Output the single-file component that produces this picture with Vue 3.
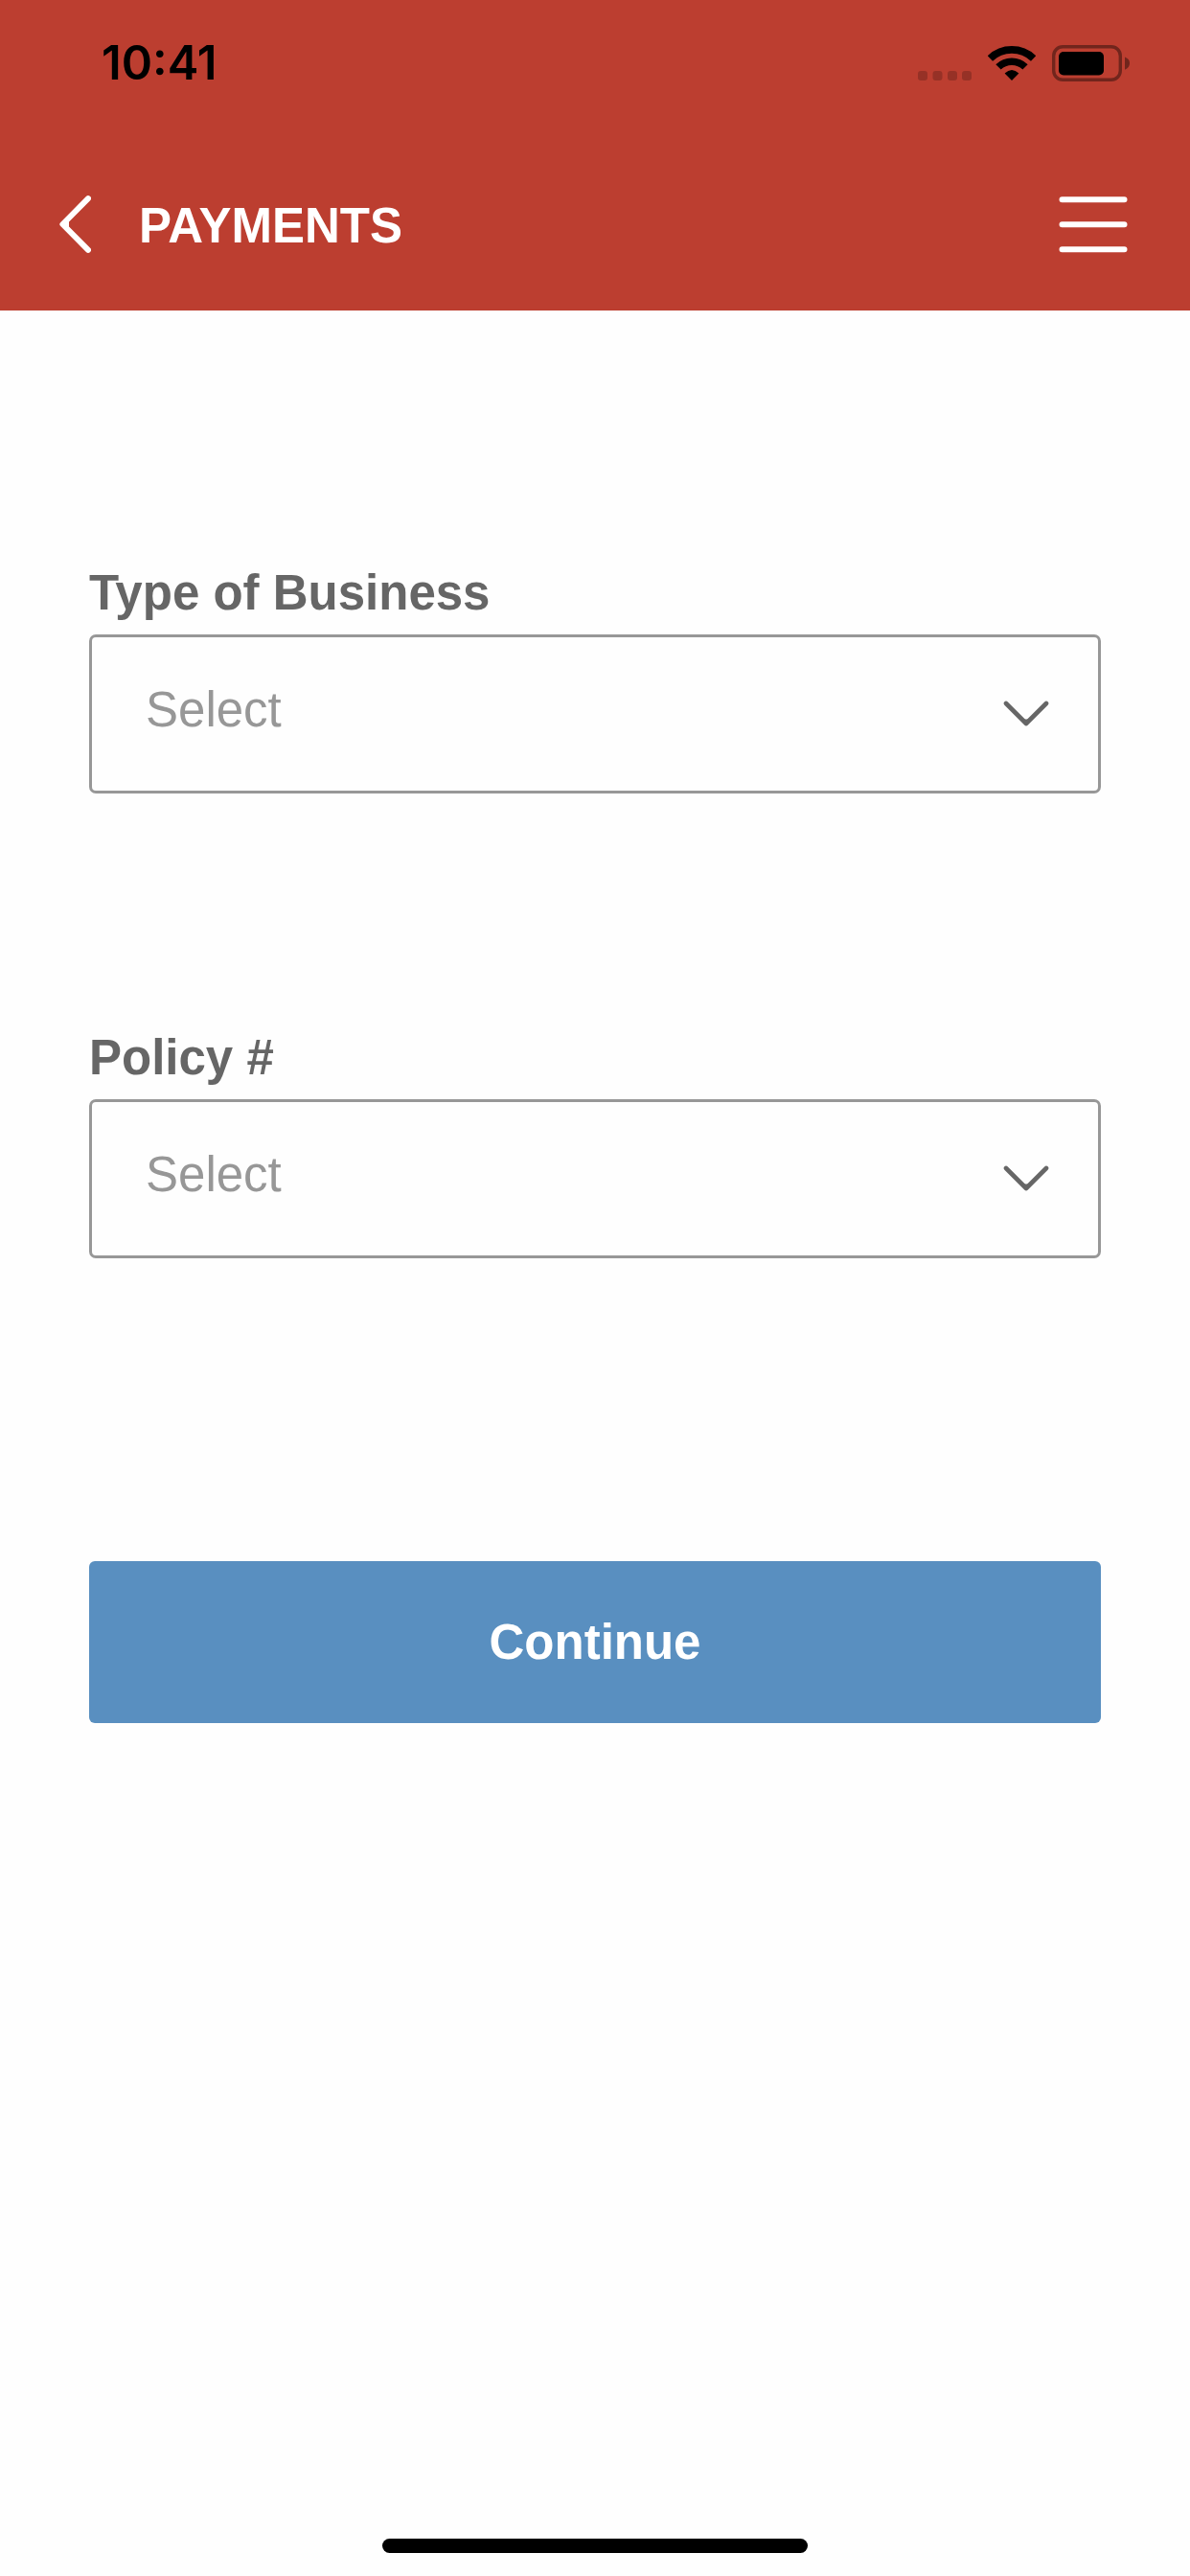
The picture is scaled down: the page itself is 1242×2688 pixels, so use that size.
<script setup>
import { ref } from 'vue'

const fields = ref([
  { id: 'business-type', label: 'Type of Business', value: '' },
  { id: 'policy-number', label: 'Policy #', value: '' },
])
</script>

<template>
  <div class="screen">
    <header class="header">
      <div class="status">
        <span class="time">10:41</span>
        <div class="indicators">
          <svg width="56" height="38" viewBox="0 0 56 38" aria-hidden="true">
            <g fill="#000" fill-opacity="0.2">
              <rect x="0" y="27" width="10" height="10" rx="3" />
              <rect x="15.5" y="27" width="10" height="10" rx="3" />
              <rect x="31" y="27" width="10" height="10" rx="3" />
              <rect x="46" y="27" width="10" height="10" rx="3" />
            </g>
          </svg>
          <svg width="50" height="38" viewBox="0 0 50 38" aria-hidden="true">
            <g fill="none" stroke="#000" stroke-width="7.6">
              <path d="M2.4 14A32.6 32.6 0 0 1 47.6 14" />
              <path d="M11 22.9A20 20 0 0 1 39 22.9" />
            </g>
            <path d="M17.6 29.6Q25 22.4 32.4 29.6L25 37Z" />
          </svg>
          <svg width="81" height="38" viewBox="0 0 81 38" aria-hidden="true">
            <rect x="1.7" y="1.7" width="69.6" height="34.6" rx="9.5" fill="none" stroke="#000" stroke-opacity="0.4" stroke-width="3.4" />
            <rect x="7" y="7" width="47" height="24.4" rx="5" />
            <path d="M76 12.6Q81 14.6 81 19T76 25.8Z" fill-opacity="0.4" />
          </svg>
        </div>
      </div>
      <nav class="bar">
        <button class="icon-button" type="button" aria-label="Back">
          <svg width="33" height="60" viewBox="0 0 33 60" fill="none" aria-hidden="true">
            <path d="M30 3.2L3.4 30L30 56.8" stroke="#fff" stroke-width="6" stroke-linecap="round" stroke-linejoin="round" />
            <path d="M4 30L13 21.5L10 27V33L13 38.5Z" fill="#fff" />
          </svg>
        </button>
        <h1 class="title">PAYMENTS</h1>
        <button class="icon-button menu" type="button" aria-label="Menu">
          <svg width="72" height="60" viewBox="0 0 72 60" stroke="#fff" stroke-width="6" stroke-linecap="round" aria-hidden="true">
            <path d="M3.5 4.3H68.5M3.5 30.3H68.5M3.5 56.3H68.5" />
          </svg>
        </button>
      </nav>
    </header>

    <form class="form" @submit.prevent>
      <div class="fields">
        <div v-for="field in fields" :key="field.id" class="field">
          <label class="label" :for="field.id">{{ field.label }}</label>
          <div class="picker">
            <select :id="field.id" v-model="field.value" class="select">
              <option value="">Select</option>
            </select>
            <svg class="chevron" width="48" height="28" viewBox="0 0 48 28" fill="none" aria-hidden="true">
              <path d="M3 3L24 24L45 3" stroke="#666" stroke-width="4.6" stroke-linecap="round" stroke-linejoin="round" />
              <path d="M18 18L21.5 19.5H26.5L30 18L24 25Z" fill="#666" />
            </svg>
          </div>
        </div>
      </div>
      <button class="continue" type="submit">Continue</button>
    </form>

    <div class="home-indicator"></div>
  </div>
</template>

<style>
body {
  margin: 0;
  background: #fefefe;
}
</style>

<style scoped>
.screen {
  display: flex;
  flex-direction: column;
  min-height: 100vh;
  background: #fefefe;
  font-family: "Liberation Sans", Arial, sans-serif;
  font-size: 51px;
  line-height: 60px;
}

.header {
  background: #bc3e30;
}

.status {
  display: flex;
  align-items: center;
  justify-content: space-between;
  height: 132px;
  padding: 0 63px 0 106px;
}

.time {
  font-family: Inter, sans-serif;
  font-size: 49px;
  font-weight: 600;
  color: #000;
}

.indicators {
  display: flex;
  gap: 17px;
}

.bar {
  display: flex;
  align-items: center;
  height: 180px;
  padding: 12px 65px 0 62px;
}

.icon-button {
  display: flex;
  padding: 0;
  border: 0;
  background: none;
}

.menu {
  margin-left: auto;
}

.title {
  margin: 0 0 0 50px;
  padding-top: 3px;
  font-size: 51px;
  font-weight: 700;
  color: #fff;
}

.form {
  display: flex;
  flex-direction: column;
  padding: 265px 93px 0;
}

.fields {
  display: flex;
  flex-direction: column;
  gap: 246px;
}

.field {
  display: flex;
  flex-direction: column;
  gap: 13px;
}

.label {
  font-weight: 700;
  color: #666;
}

.picker {
  display: grid;
  align-items: center;
}

.select,
.chevron {
  grid-area: 1 / 1;
}

.select {
  appearance: none;
  box-sizing: border-box;
  width: 100%;
  height: 166px;
  padding: 0 120px 8px 56px;
  border: 3px solid #979797;
  border-radius: 7px;
  background: transparent;
  font: inherit;
  color: #979797;
}

.chevron {
  justify-self: end;
  margin-right: 54px;
  pointer-events: none;
}

.continue {
  height: 169px;
  margin-top: 316px;
  border: 0;
  border-radius: 6px;
  background: #598fc0;
  font: inherit;
  font-weight: 700;
  color: #fff;
}

.home-indicator {
  width: 444px;
  height: 15px;
  margin: auto auto 24px;
  border-radius: 8px;
  background: #000;
}
</style>
